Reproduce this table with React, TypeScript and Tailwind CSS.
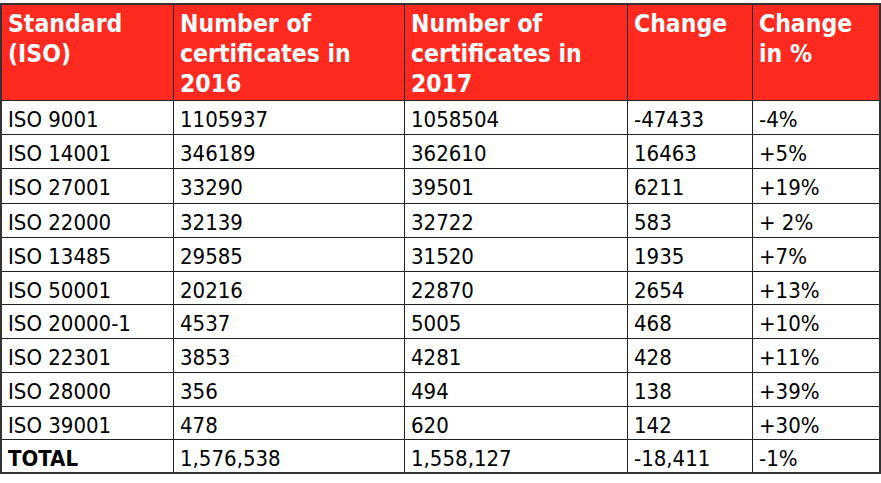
import React from "react";

const rows: [string, string, string, string, string][] = [
  ["ISO 9001", "1105937", "1058504", "-47433", "-4%"],
  ["ISO 14001", "346189", "362610", "16463", "+5%"],
  ["ISO 27001", "33290", "39501", "6211", "+19%"],
  ["ISO 22000", "32139", "32722", "583", "+ 2%"],
  ["ISO 13485", "29585", "31520", "1935", "+7%"],
  ["ISO 50001", "20216", "22870", "2654", "+13%"],
  ["ISO 20000-1", "4537", "5005", "468", "+10%"],
  ["ISO 22301", "3853", "4281", "428", "+11%"],
  ["ISO 28000", "356", "494", "138", "+39%"],
  ["ISO 39001", "478", "620", "142", "+30%"],
  ["TOTAL", "1,576,538", "1,558,127", "-18,411", "-1%"],
];

const heights = [
  "h-[34px]",
  "h-[34px]",
  "h-[35px]",
  "h-[34px]",
  "h-[34px]",
  "h-[33px]",
  "h-[34px]",
  "h-[34px]",
  "h-[34px]",
  "h-[33px]",
  "h-[33px]",
];

const headers = [
  "Standard (ISO)",
  "Number of certificates in 2016",
  "Number of certificates in 2017",
  "Change",
  "Change in %",
];

const grid = "grid grid-cols-[171px_231px_223px_125px_127px]";

export default function App() {
  return (
    <div
      className="w-[881px] h-[483px] bg-white pt-[3px]"
      style={{ fontFamily: '"DejaVu Sans Condensed", "DejaVu Sans", Verdana, sans-serif', fontStretch: "condensed" }}
    >
      <div className="w-[881px] border-2 border-[#333333]">
        <div className={`${grid} h-[95px] bg-[#fe2a1f]`}>
          {headers.map((h, i) => (
            <div
              key={i}
              className={`pl-[6px] pr-[2px] pt-[4px] text-white font-bold text-[24.5px] leading-[30px] ${i > 0 ? "border-l border-[#222222]" : ""}`}
            >
              {h}
            </div>
          ))}
        </div>
        {rows.map((r, ri) => (
          <div key={ri} className={`${grid} ${heights[ri]} border-t border-[#222222] text-black`}>
            {r.map((c, ci) => (
              <div
                key={ci}
                className={`pl-[6px] pt-[7px] text-[22px] leading-[24px] whitespace-nowrap ${ci > 0 ? "border-l border-[#222222]" : ""} ${ri === rows.length - 1 && ci === 0 ? "font-bold" : ""}`}
              >
                {c}
              </div>
            ))}
          </div>
        ))}
      </div>
    </div>
  );
}
